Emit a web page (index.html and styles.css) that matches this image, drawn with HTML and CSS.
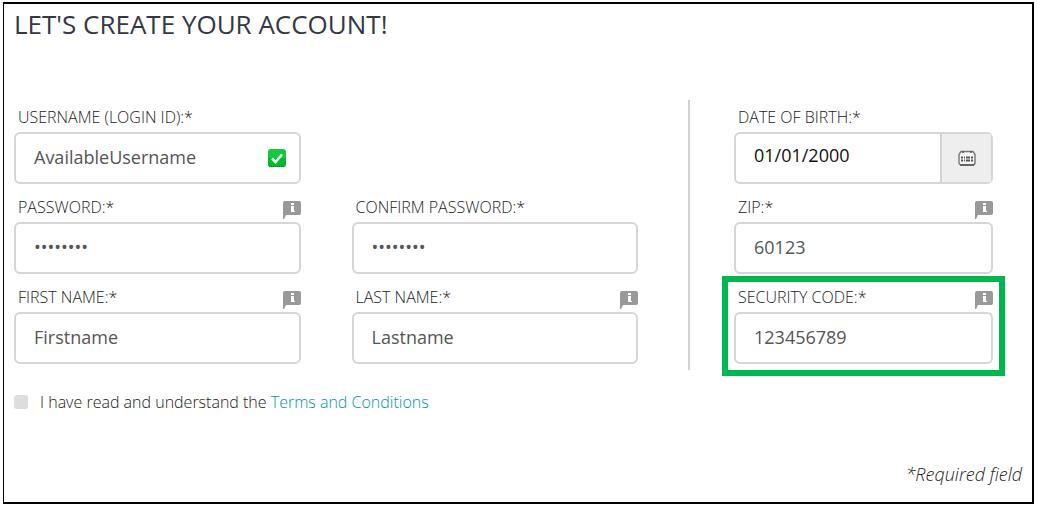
FILE: index.html
```html
<!DOCTYPE html>
<html lang="en">
<head>
    <meta charset="UTF-8">
    <meta name="viewport" content="width=device-width, initial-scale=1.0">
    <title>Create Your Account</title>
    <link rel="stylesheet" href="styles.css">
</head>
<body>
    <!-- shared icon shapes -->
    <svg class="sprite" aria-hidden="true">
        <symbol id="icon-info" viewBox="0 0 18 18">
            <path fill="#999" d="M2 0h14a2 2 0 0 1 2 2v10a2 2 0 0 1-2 2H3l-2 4H0V2a2 2 0 0 1 2-2z"/>
            <path fill="#fff" d="M8 2h3v2H8zM8 5h3v5h1v1H8z"/>
        </symbol>
    </svg>

    <form class="page">
        <h1>LET'S CREATE YOUR ACCOUNT!</h1>

        <div class="columns">
            <div class="account">
                <div class="field">
                    <div class="field-head">
                        <label for="username">USERNAME (LOGIN ID):*</label>
                    </div>
                    <div class="control">
                        <input type="text" id="username" value="AvailableUsername">
                        <svg class="valid" viewBox="0 0 18 18" aria-hidden="true">
                            <rect width="18" height="18" rx="3" fill="#12c93f"/>
                            <path d="M0 9h18v6a3 3 0 0 1-3 3H3a3 3 0 0 1-3-3z" fill="#04bb2c"/>
                            <path d="M1 17.500h16" stroke="#2b6b38" stroke-dasharray="1 1"/>
                            <path d="M4 9.500l3.500 3.500L14 5.500" fill="none" stroke="#f1f1f1" stroke-width="2.600"/>
                        </svg>
                    </div>
                </div>

                <div class="field first">
                    <div class="field-head">
                        <label for="password">PASSWORD:*</label>
                        <svg class="info" aria-hidden="true"><use href="#icon-info"/></svg>
                    </div>
                    <div class="control">
                        <input type="password" id="password" value="password">
                    </div>
                </div>

                <div class="field">
                    <div class="field-head">
                        <label for="confirm">CONFIRM PASSWORD:*</label>
                    </div>
                    <div class="control">
                        <input type="password" id="confirm" value="password">
                    </div>
                </div>

                <div class="field">
                    <div class="field-head">
                        <label for="firstname">FIRST NAME:*</label>
                        <svg class="info" aria-hidden="true"><use href="#icon-info"/></svg>
                    </div>
                    <div class="control">
                        <input type="text" id="firstname" value="Firstname">
                    </div>
                </div>

                <div class="field">
                    <div class="field-head">
                        <label for="lastname">LAST NAME:*</label>
                        <svg class="info" aria-hidden="true"><use href="#icon-info"/></svg>
                    </div>
                    <div class="control">
                        <input type="text" id="lastname" value="Lastname">
                    </div>
                </div>
            </div>

            <div class="identity">
                <div class="field">
                    <div class="field-head">
                        <label for="dob">DATE OF BIRTH:*</label>
                    </div>
                    <div class="control date">
                        <input type="text" id="dob" value="01/01/2000">
                        <button type="button" aria-label="Open calendar">
                            <svg viewBox="0 0 18 16" aria-hidden="true">
                                <path d="M1 12.500V4.500L3 1.500h12L17 4.500v8q0 2.500-2.500 2.500h-11Q1 15 1 12.500z" fill="#f5f5f5" stroke="#777" stroke-width="1.400"/>
                                <path d="M2 15h14" stroke="#555" stroke-width="1.500"/>
                                <path d="M5 1v2M13 1v2" stroke="#555" stroke-width="1.500"/>
                                <path d="M3 7.500h2m1 0h1m1 0h4m1 0h2M3 10.500h2m1 0h1m1 0h4m1 0h2" stroke="#555" stroke-width="2"/>
                            </svg>
                        </button>
                    </div>
                </div>

                <div class="field">
                    <div class="field-head">
                        <label for="zip">ZIP:*</label>
                        <svg class="info" aria-hidden="true"><use href="#icon-info"/></svg>
                    </div>
                    <div class="control">
                        <input type="text" id="zip" value="60123">
                    </div>
                </div>

                <div class="field highlight">
                    <div class="field-head">
                        <label for="code">SECURITY CODE:*</label>
                        <svg class="info" aria-hidden="true"><use href="#icon-info"/></svg>
                    </div>
                    <div class="control">
                        <input type="text" id="code" value="123456789">
                    </div>
                </div>
            </div>
        </div>

        <div class="terms">
            <input type="checkbox" id="terms">
            <label for="terms">I have read and understand the <a href="#">Terms and Conditions</a></label>
        </div>

        <p class="required">*Required field</p>
    </form>
</body>
</html>
```

FILE: styles.css
```css
* {
    box-sizing: border-box;
}
body {
    margin: 0;
    background: #fff;
    color: #222;
    font-family: "Open Sans", "Noto Sans", sans-serif;
    font-size: 16px;
    font-weight: 300;
}
.sprite {
    display: none;
}
.page {
    display: flex;
    flex-direction: column;
    margin: 2px 3px;
    min-height: calc(100vh - 4px);
    padding: 0 10px 12px;
    border: 2px solid #000;
    border-left-width: 1px;
}
h1 {
    margin: 2px 0 58px;
    color: #343844;
    font-size: 26px;
    font-weight: 400;
    line-height: 36px;
}
.columns {
    display: grid;
    grid-template-columns: 624fr 305fr;
    gap: 50px;
    padding-right: 29px;
}
.account {
    display: grid;
    grid-template-columns: 1fr 1fr;
    gap: 14px 51px;
    padding: 8px 0 6px;
}
.identity {
    display: grid;
    gap: 14px;
    padding: 8px 0 6px 44px;
    border-left: 2px solid #d2d2d2;
}
.field {
    min-width: 0;
}
.field.first {
    grid-column: 1;
}
.field-head {
    display: flex;
    align-items: flex-start;
    justify-content: space-between;
    height: 24px;
    padding-left: 4px;
}
.field-head label {
    line-height: 18px;
}
.info {
    width: 18px;
    height: 18px;
    margin-top: 3px;
}
.control {
    display: flex;
    align-items: center;
    height: 52px;
    padding-right: 13px;
    border: 2px solid #d6d6d6;
    border-radius: 6px;
}
.control input {
    flex: 1;
    min-width: 0;
    height: 100%;
    padding: 0 0 2px 18px;
    border: none;
    outline: none;
    background: none;
    color: #555;
    font-family: inherit;
    font-size: 18px;
    font-weight: 400;
}
.valid {
    width: 18px;
    height: 18px;
}
.control.date {
    padding-right: 0;
}
.date input {
    padding-bottom: 6px;
    color: #111;
}
.date button {
    display: flex;
    align-items: center;
    justify-content: center;
    width: 51px;
    height: 100%;
    padding: 0;
    border: none;
    border-left: 2px solid #d2d2d2;
    background: #eee;
}
.date svg {
    width: 18px;
    height: 16px;
}
.highlight {
    outline: 6px solid #00b64f;
    outline-offset: 6px;
}
.terms {
    display: flex;
    align-items: center;
    gap: 12px;
    margin-top: 22px;
    line-height: 20px;
}
.terms input {
    appearance: none;
    width: 14px;
    height: 14px;
    margin: 0;
    border-radius: 3px;
    background: #ddd;
}
.terms input:checked {
    background: #00a5b5;
}
.terms a {
    color: #0096a6;
    text-decoration: none;
}
.required {
    margin: auto 0 0;
    font-size: 18px;
    font-style: italic;
    line-height: 32px;
    text-align: right;
}
```
